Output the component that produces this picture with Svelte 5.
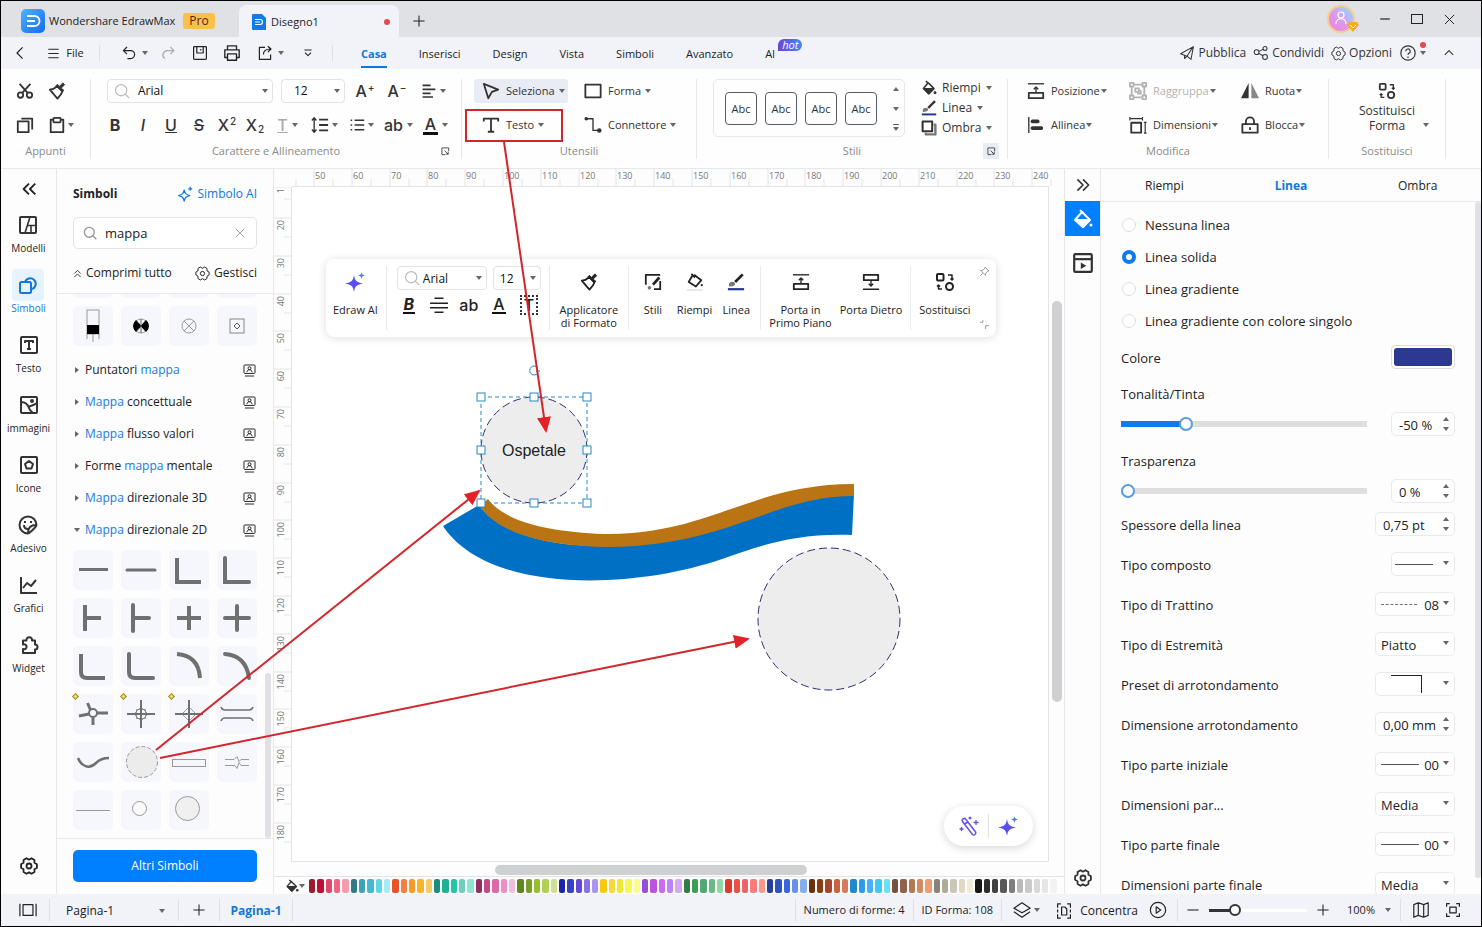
<script>
  const icons = {
    back: '<path d="M12 3L5 10l7 7"/>',
    menu: '<path d="M2 3.500h16M2 10h16M2 16.500h16"/>',
    undo: '<path d="M7.500 2.500L3 7l4.500 4.500M3.500 7H12a5 5 0 0 1 0 10H8"/>',
    redo: '<path d="M13 2.500L17.500 7 13 11.500M17 7H9a5.500 5.500 0 0 0-3 10"/>',
    save: '<rect x="2" y="2" width="16" height="16" rx="1"/><path d="M6 2v8h8V2M11 5v2"/>',
    print: '<path d="M5 6V2h10v4M5 15H2V6.500h16V15h-3"/><rect x="5" y="11" width="10" height="7"/>',
    share: '<path d="M10 3H3v15h14v-6M8 12c0-4 3-7 9-7M13.500 1.500L17.500 5l-4 4"/>',
    more: '<path d="M4 5h12M5 9.500l5 5 5-5"/>',
    plane: '<path d="M2 11L18 2l-3 16-5-4zM7 12.500V17l3-3 7-11"/>',
    nodes: '<circle cx="4.500" cy="9" r="3"/><circle cx="15" cy="4.500" r="2.500"/><circle cx="15" cy="15" r="3"/><path d="M7.500 8l5-2.500M7 10.500l5.500 3"/>',
    gear: '<path d="M18.800 8.100v3.800l-2.700 1.600-.1 3.200-3.200 1.900L10 17l-2.800 1.600L4 16.700l-.1-3.200-2.700-1.600V8.100l2.700-1.600.1-3.200 3.200-1.900L10 3l2.800-1.600L16 3.300l.1 3.200z"/><circle cx="10" cy="10" r="2.800"/>',
    help: '<circle cx="10" cy="10" r="8"/><path d="M7.500 8a2.500 2.500 0 1 1 3.500 2.300c-.8.4-1 .8-1 1.700M10 14v1.500"/>',
    up: '<path d="M3 13l7-7 7 7"/>',
    cut: '<circle cx="5" cy="14.500" r="3"/><circle cx="15" cy="14.500" r="3"/><path d="M4 2l9 10M16 2L7 12"/>',
    brush: '<path d="M2 8.500c4 0 6-2 8-4l6 6c-1 3-3 5-5.500 8z"/><path d="M9 4l7 7 1.500-2L14.500 7l4-4-2-2-4 4-2-2.500z" fill="currentColor" stroke-width="1"/>',
    copy: '<rect x="2" y="6" width="12" height="12"/><path d="M6 3h12v12"/>',
    paste: '<path d="M6 4H3v14h14V4h-3"/><rect x="6" y="2" width="8" height="5" rx="1"/>',
    alignCenter: '<path d="M2 3h10M2 8h16M2 13h10M2 17.500h13"/>',
    lines: '<path d="M9 4h10M9 10h10M9 16h10"/><path d="M3.500 3v14M1 5l2.500-3L6 5M1 15l2.500 3L6 15" stroke-width="1.500"/>',
    bullets: '<path d="M7 4h12M7 10h12M7 16h12M2 4h2M2 10h2M2 16h2"/>',
    pointer: '<path d="M2 2l16 6.500-7 2.500-4 7z"/>',
    rect: '<rect x="1.500" y="3" width="17" height="14"/>',
    textTool: '<path d="M2 6V3h16v3M10 3v14M6.500 17.500h7"/>',
    connector: '<path d="M3 3h7v13h7" stroke-width="1.500"/><circle cx="2.500" cy="3" r="2" fill="currentColor" stroke="none"/><circle cx="17" cy="16" r="2.500" fill="currentColor" stroke="none"/>',
    bucket: '<path d="M6 1.500l4 3M9 3.500l7 7-6.500 6.500L3 10.500z"/><path d="M4 11h12l-6 6z" fill="currentColor"/><circle cx="17.500" cy="16" r="1.800" fill="currentColor" stroke="none"/>',
    bucketLine: '<path d="M6 1l4 4M9 2l8 6-6 7-8-5 4-7"/><circle cx="17.500" cy="13.500" r="1.200" fill="currentColor" stroke="none"/><path d="M1 19h18" stroke="#e6e6e6"/>',
    pen: '<path d="M17.500 1.500L9 10" stroke-width="3"/><path d="M3 14c0-3 2-4 4-3s1 3-4 3z" fill="#777" stroke="#777"/><path d="M1 18h18" stroke="#2b3990" stroke-width="2.500"/>',
    shadow: '<path d="M16 6h2v12H6v-2" stroke="#777" stroke-width="3"/><rect x="2" y="2" width="12" height="12" fill="#fff" stroke-width="2.500"/>',
    front: '<path d="M1 2h18" stroke-width="1.500"/><path d="M10 12V6M7.500 8L10 5.500 12.500 8" stroke-width="1.500"/><rect x="2" y="12" width="16" height="6"/>',
    behind: '<rect x="2" y="2" width="16" height="6"/><path d="M10 8v6M7.500 12l2.500 2.500 2.500-2.500M1 18h18" stroke-width="1.500"/>',
    alignLeft: '<path d="M2 1v18" stroke-width="1.500"/><path d="M6 6h6M6 13.500h10" stroke-width="4" stroke-linecap="round"/>',
    group: '<rect x="3" y="3" width="14" height="14"/><rect x="1" y="1" width="4" height="4" fill="#fff"/><rect x="15" y="1" width="4" height="4" fill="#fff"/><rect x="1" y="15" width="4" height="4" fill="#fff"/><rect x="15" y="15" width="4" height="4" fill="#fff"/><rect x="7" y="7" width="4" height="4"/><path d="M13 9v4H9"/>',
    size: '<rect x="2.500" y="7.500" width="11" height="11"/><path d="M1 3h14M1 1v4M15 1v4M18 7v12M16.500 7h3M16.500 19h3" stroke-width="1.300"/>',
    flip: '<path d="M8.500 1v17H0z" fill="currentColor" stroke="none"/><path d="M11.500 1v17H20z" fill="#888" stroke="none"/>',
    lock: '<rect x="1.500" y="9" width="17" height="9.500"/><path d="M5.500 9V6a4.500 4.500 0 0 1 9 0v3M10 12.500v3"/>',
    swap: '<rect x="2" y="2" width="6.500" height="6.500" rx="1"/><circle cx="14.500" cy="14.500" r="3.500"/><path d="M13 3h4v5M15.500 6.500L17 8l1.500-1.500M7 17H3.500v-4M2 14.500l1.500-1.500L5 14.500" stroke-width="1.500"/>',
    launch: '<path d="M9 17H2V2h15v7M8 8l8 8M16 10v6h-6"/>',
    collapse: '<path d="M10 4l-6 6 6 6M17 4l-6 6 6 6"/>',
    expand: '<path d="M3 3l7 7-7 7M10 3l7 7-7 7"/>',
    templates: '<rect x="2" y="2" width="16" height="16" rx="1"/><path d="M12 2L7 18M9.500 10.500H18M13 10.500V18" stroke-width="1.600"/>',
    shapes: '<path d="M7 7a5.500 5.500 0 1 1 7 7"/><rect x="2" y="7" width="11" height="11" rx="1.500"/>',
    textBox: '<rect x="2" y="2" width="16" height="16" rx="1"/><path d="M6 8V6h8v2M10 6v8M8 14h4"/>',
    image: '<rect x="2" y="2" width="16" height="16" rx="1"/><path d="M2 7c5 0 7 3 8 6s3 4 4 5M10 12c2-2 4-1 8-4"/><circle cx="13" cy="6" r="1" fill="currentColor"/>',
    iconBox: '<rect x="2" y="2" width="16" height="16" rx="1"/><path d="M10 6l4 3-1.500 4.500h-5L6 9z"/>',
    sticker: '<path d="M18.500 10A8.500 8.500 0 1 0 10 18.500c1.500 0 8.500-7 8.500-8.500zM10 18c0-5 3-8 8-8M6 10c0 3 2 4 4 4"/><path d="M7 6v2M13 6v2"/>',
    chart: '<path d="M2 2v16h16M4 13l4-5 4 3 5-6"/>',
    widget: '<path d="M4 5.500h3.500a2.800 2.800 0 1 1 5.500 0h3v4a2.500 2.500 0 1 1 0 5v3.500H4v-4a2.500 2.500 0 1 0 0-4.500z"/>',
    search: '<circle cx="9" cy="9" r="7"/><path d="M14 14l5 5"/>',
    close: '<path d="M3 3l14 14M17 3L3 17"/>',
    foldUp: '<path d="M3 10l7-7 7 7M3 18l7-7 7 7"/>',
    badge: '<rect x="1.500" y="1.500" width="17" height="13" rx="1"/><circle cx="10" cy="6.500" r="2.300"/><path d="M6 12.500c.5-5 7.500-5 8 0M3 18.500h14"/>',
    sparkle: '<path d="M9 5c1 4.500 2 5.500 7 7-5 1.500-6 2.500-7 7-1-4.500-2-5.500-7-7 5-1.500 6-2.500 7-7zM16.500 1v5M14 3.500h5"/>',
    page: '<path d="M1 3v14M19 3v14"/><rect x="4.500" y="4" width="11" height="12"/>',
    plus: '<path d="M10 2v16M2 10h16"/>',
    minus: '<path d="M2 10h16"/>',
    layers: '<path d="M10 2l9 6-9 5-9-5zM1 12l9 6 9-6"/>',
    focus: '<path d="M6 1H2v5M14 1h4v5M6 19H2v-5M14 19h4v-5M2 8v4M18 8v4"/><path d="M7 5h4l2.500 2.500V15H7z"/>',
    play: '<circle cx="10" cy="10" r="8.500"/><path d="M8 6.500l5 3.500-5 3.500z"/>',
    map: '<path d="M2 4l5-2 6 2 5-2v14l-5 2-6-2-5 2zM7 2v14M13 4v14"/>',
    screen: '<path d="M6 2H2v4M14 2h4v4M6 18H2v-4M14 18h4v-4"/><rect x="6" y="6.500" width="8" height="7"/>',
    slides: '<rect x="2" y="2" width="16" height="16" rx="1"/><path d="M2 6.500h16"/><path d="M8 9.500l5 3-5 3z" fill="currentColor" stroke="none"/>',
    fillSolid: '<path d="M7 1l3 3"/><path d="M9 3l8 8-7 7-8-7z"/><path d="M3 11h13l-6 7z" fill="currentColor"/><circle cx="18" cy="16" r="1.500" fill="currentColor" stroke="none"/>',
    strikeLines: '<path d="M5 2.500h10M0 8h20M0 13h20M5 18h10" stroke-width="1.800"/>',
    styles: '<path d="M2 13V2h16M18 9v9h-7"/><path d="M17 5l-7 8" stroke-width="3"/><circle cx="6" cy="16.500" r="2" fill="#777" stroke="none"/>',
    pin: '<path d="M11 2l7 7-3 1-3 4v3l-9-9h3l4-3zM7 13l-5 5"/>',
    shrink: '<path d="M2 6h5V2M12 18v-6h6"/>'
  };

  const rail = [
    ['templates', 'Modelli'], ['shapes', 'Simboli'], ['textBox', 'Testo'], ['image', 'immagini'],
    ['iconBox', 'Icone'], ['sticker', 'Adesivo'], ['chart', 'Grafici'], ['widget', 'Widget']
  ];

  const tabs = ['Casa', 'Inserisci', 'Design', 'Vista', 'Simboli', 'Avanzato'];

  const categories = [
    ['Puntatori ', 'mappa', ''],
    ['', 'Mappa', ' concettuale'],
    ['', 'Mappa', ' flusso valori'],
    ['Forme ', 'mappa', ' mentale'],
    ['', 'Mappa', ' direzionale 3D'],
    ['', 'Mappa', ' direzionale 2D']
  ];

  const electric = [
    '<rect x="14" y="4" width="12" height="24" stroke="#999"/><rect x="14" y="19" width="12" height="9" fill="#000" stroke="none"/><path d="M14 28v5M20 28v8M26 28v5" stroke="#999"/>',
    '<circle cx="20" cy="20" r="7" stroke="#999"/><path d="M20 20l-5-5.500a7.500 7.500 0 0 0 0 11zM20 20l5-5.500a7.500 7.500 0 0 1 0 11z" fill="#000" stroke="#000"/><path d="M20 13v14" stroke="#666"/>',
    '<circle cx="20" cy="20" r="7" stroke="#999"/><path d="M15 15l10 10M25 15L15 25" stroke="#999"/>',
    '<rect x="13" y="13" width="14" height="14" stroke="#888"/><path d="M20 17l3 3-3 3-3-3z" stroke="#555"/>'
  ];

  const roads = [
    '<path d="M6 19.500h29" stroke-width="3"/>',
    '<path d="M6 20h28" stroke-width="3" stroke-linecap="round"/>',
    '<path d="M8 8v24h24" stroke-width="4"/>',
    '<path d="M8 8v24h24" stroke-width="4" stroke-linecap="round"/>',
    '<path d="M12 7v26M12 20h16" stroke-width="4"/>',
    '<path d="M12 7v26M12 20h16" stroke-width="4" stroke-linecap="round"/>',
    '<path d="M20 8v24M8 20h24" stroke-width="4"/>',
    '<path d="M20 8v24M8 20h24" stroke-width="4" stroke-linecap="round"/>',
    '<path d="M8 8v18q0 6 6 6h18" stroke-width="4"/>',
    '<path d="M8 8v18q0 6 6 6h18" stroke-width="4" stroke-linecap="round"/>',
    '<path d="M8 8c14 1 22 9 23 24" stroke-width="4"/>',
    '<path d="M8 8c14 1 22 9 24 24" stroke-width="4" stroke-linecap="round"/>',
    '<circle cx="20" cy="19" r="4" stroke-width="2"/><path d="M24 19h11M20 23v8M16 20L6 22M17.500 16l-3-7" stroke-width="3"/>',
    '<path d="M20 6v28M6 20h28" stroke-width="2"/><path d="M20 13l7 7-7 7-7-7zM15.500 15.500h9v9h-9z" stroke-width="1" opacity="0.7"/>',
    '<path d="M20 6v28M6 20h28" stroke-width="2"/><path d="M20 13l7 7-7 7-7-7z" stroke-width="1" opacity="0.7"/>',
    '<path d="M4 13q1 3 4 3h24q3 0 4-3M4 27q1-3 4-3h24q3 0 4 3" stroke-width="1.500"/>',
    '<path d="M5 16c3 8 11 12 18 5 4-4 7-5 13-5" stroke-width="2.500"/>',
    '<circle cx="21" cy="20" r="15.500" fill="#ececec" stroke="#999" stroke-dasharray="4 2"/>',
    '<rect x="3.500" y="17.500" width="33" height="7" stroke="#999"/>',
    '<path d="M8 17.500h9l3-3 2 5 2-2h8M8 23.500h10l2 3 2-6 2 3h8" stroke="#999"/>',
    '<path d="M3 20.500h34" stroke="#999"/>',
    '<circle cx="18.500" cy="18.500" r="7" fill="#fafafa" stroke="#999"/>',
    '<circle cx="18.500" cy="18.500" r="12" fill="#f0f0f0" stroke="#999"/>'
  ];
  const starred = [12, 13, 14];

  const palette = (
    '9b1c2c c00d35 e0476a ee6583 f59cae 32798a 3ea3b8 45b8d6 5fd5ea a6ecf7 ' +
    'e8532c f77e42 f79a2c f7b52c f8c86a 1b8f7c 1fb093 22c6a9 6dd0bf 8fe5d4 ' +
    '8f2f63 c34a87 dc68a8 ee8cc6 ecc0dc 61861f 7a9e2e 98bd2e b2d053 d0df93 ' +
    '1d24a5 3840c9 6447d6 8c70e8 ab95ef f6c80e f6d93a ecea33 f7f75a fbfb93 ' +
    '9650d4 bd52dd ca6cf0 ba84f8 d5a8f3 367b45 3b9f54 52a874 66ba86 93d5a9 ' +
    'e0372f ea5045 ea6469 fb7a7c fb968b 243f9c 2d52c4 3866df 6890ef 86aeea ' +
    '6a300c 8d3c0d a5472d c8633e d97a5c 2388c8 2e9bed 47b1f8 3fc8f3 68e1f8 ' +
    '76513c 92614a b47753 d38962 ee9c70 8b8178 b0aa99 cbc7b8 e0d9c8 f0ead8 ' +
    '161616 2d2d2d 414141 585858 7d7d7d b9b9b9 c9c9c9 d9d9d9 e5e5e5 f2f2f2'
  ).split(' ');

  const step = 37.8;
  const xTicks = Array.from({ length: 20 }, (_, i) => ({ label: 50 + i * 10, pos: Math.round(22 + i * step) }));
  const yTicks = Array.from({ length: 17 }, (_, i) => ({ label: 20 + i * 10, pos: Math.round(31 + i * step) }));

  const handles = [[0, 0], [53, 0], [106, 0], [0, 53], [106, 53], [0, 106], [53, 106], [106, 106]];

  const rows = [
    { label: 'Spessore della linea', kind: 'spin', value: '0,75 pt' },
    { label: 'Tipo composto', kind: 'line', value: '' },
    { label: 'Tipo di Trattino', kind: 'dash', value: '08' },
    { label: 'Tipo di Estremità', kind: 'text', value: 'Piatto' },
    { label: 'Preset di arrotondamento', kind: 'corner', value: '' },
    { label: 'Dimensione arrotondamento', kind: 'spin', value: '0,00 mm' },
    { label: 'Tipo parte iniziale', kind: 'line', value: '00' },
    { label: 'Dimensioni par...', kind: 'text', value: 'Media' },
    { label: 'Tipo parte finale', kind: 'line', value: '00' },
    { label: 'Dimensioni parte finale', kind: 'text', value: 'Media' }
  ];

  let lineType = $state('Linea solida');
  let search = $state('mappa');
  let tint = $state(-50);
  let transparency = $state(0);
  let zoom = $state(23);
</script>

{#snippet icon(name, size = 16, weight = 2)}
  <svg class="icon" width={size} height={size} viewBox="0 0 20 20" fill="none" stroke="currentColor" stroke-width={weight} aria-hidden="true">{@html icons[name]}</svg>
{/snippet}

{#snippet tool(name, label)}
  <button class="tool">{@render icon(name, 18)}<span>{label}</span><i class="caret"></i></button>
{/snippet}

{#snippet star(size)}
  <svg width={size} height={size} viewBox="0 0 20 20" aria-hidden="true">
    <defs>
      <linearGradient id="starFill" x1="0" y1="0" x2="1" y2="1"><stop offset="0" stop-color="#4a5cf0" /><stop offset="1" stop-color="#6a45ea" /></linearGradient>
    </defs>
    <path d="M9 3c1 6 2.500 7 9 8.500C11.500 13 10 14 9 20c-1-6-2.500-7-9-8.500C6.500 10 8 9 9 3z" fill="url(#starFill)" />
    <path d="M16.500 0c.5 2.500.8 3 3.500 3.500-2.700.5-3 1-3.500 3.500-.5-2.500-.8-3-3.500-3.500 2.700-.5 3-1 3.500-3.500z" fill="#4a7be8" />
  </svg>
{/snippet}

{#snippet tile(art, i, marked)}
  <button class="tile" aria-label="Simbolo {i + 1}">
    <svg width="40" height="40" viewBox="0 0 40 40" fill="none" stroke="#707070">{@html art}</svg>
    {#if marked}<i class="diamond"></i>{/if}
  </button>
{/snippet}

{#snippet steps()}
  <span class="steps"><i class="caret flip"></i><i class="caret"></i></span>
{/snippet}

<div class="window">
  <header class="titlebar">
    <div class="brand">
      <svg width="24" height="24" viewBox="0 0 24 24" aria-hidden="true">
        <defs><linearGradient id="logo" x1="0" y1="0" x2="1" y2="1"><stop offset="0" stop-color="#4fb4fb" /><stop offset="1" stop-color="#1269f5" /></linearGradient></defs>
        <rect width="24" height="24" rx="5" fill="url(#logo)" />
        <path d="M6 7h7.500a5 5 0 0 1 0 10H6M6 12h8" fill="none" stroke="#fff" stroke-width="1.800" />
      </svg>
      <span>Wondershare EdrawMax</span>
      <b class="pro">Pro</b>
    </div>
    <div class="doc-tab">
      <svg width="14" height="16" viewBox="0 0 14 16" aria-hidden="true">
        <path d="M1 0h9l4 4v12H1q-1 0-1-1V1q0-1 1-1z" fill="#0f7bee" />
        <path d="M3 5.500h5a2.500 2.500 0 0 1 0 5H3M3 8h5" fill="none" stroke="#fff" stroke-width="1.200" />
      </svg>
      <span>Disegno1</span>
      <i class="dot"></i>
    </div>
    <button class="plain new-tab" aria-label="Nuovo">{@render icon('plus', 14, 1.5)}</button>
    <div class="win-controls">
      <svg width="32" height="30" viewBox="0 0 32 30" aria-hidden="true">
        <defs><linearGradient id="avatar" x1="1" y1="0" x2="0" y2="1"><stop offset="0.100" stop-color="#8fdcf5" /><stop offset="0.500" stop-color="#d99cf5" /><stop offset="1" stop-color="#f77bd0" /></linearGradient></defs>
        <circle cx="14" cy="15" r="13" fill="url(#avatar)" stroke="#f7cd8c" stroke-width="2" />
        <circle cx="14" cy="11" r="3" fill="none" stroke="#fff" stroke-width="1.200" />
        <path d="M9 20c0-7 10-7 10 0" fill="none" stroke="#fff" stroke-width="1.200" />
        <path d="M22 18h8l2 3-6 7-6-7z" fill="#f7ac1e" />
        <path d="M23 21l3 3 3-3" fill="none" stroke="#fff" />
      </svg>
      <button class="plain" aria-label="Riduci">{@render icon('minus', 12, 2)}</button>
      <button class="plain" aria-label="Ingrandisci"><svg width="12" height="12" viewBox="0 0 12 12"><rect x="0.500" y="1.500" width="11" height="9" fill="none" stroke="#222" /></svg></button>
      <button class="plain" aria-label="Chiudi">{@render icon('close', 13, 1.5)}</button>
    </div>
  </header>

  <nav class="menubar">
    <div class="quick">
      <button class="plain back" aria-label="Indietro">{@render icon('back', 16, 1.5)}</button>
      <button class="plain file">{@render icon('menu', 13, 1.5)}<span>File</span></button>
      <i class="rule"></i>
      <button class="plain w36" aria-label="Annulla">{@render icon('undo', 16, 1.5)}<i class="caret"></i></button>
      <button class="plain w32 faded" aria-label="Ripeti">{@render icon('redo', 16, 1.5)}</button>
      <button class="plain w32" aria-label="Salva">{@render icon('save', 16, 1.5)}</button>
      <button class="plain w32" aria-label="Stampa">{@render icon('print', 18, 1.5)}</button>
      <button class="plain w44" aria-label="Esporta">{@render icon('share', 16, 1.5)}<i class="caret"></i></button>
      <button class="plain w32" aria-label="Personalizza">{@render icon('more', 12, 1.8)}</button>
      <i class="rule last"></i>
    </div>
    <div class="tabs">
      {#each tabs as tab, i}
        <button class="plain tab" class:active={i === 0}>{tab}</button>
      {/each}
      <button class="plain tab ai">AI<span class="hot">hot</span></button>
    </div>
    <div class="menu-right">
      <button class="plain">{@render icon('plane', 16, 1.3)}Pubblica</button>
      <button class="plain">{@render icon('nodes', 16, 1.3)}Condividi</button>
      <button class="plain">{@render icon('gear', 15, 1.3)}Opzioni</button>
      <button class="plain help" aria-label="Aiuto">{@render icon('help', 18, 1.3)}<i class="caret"></i><i class="dot"></i></button>
      <button class="plain fold" aria-label="Comprimi">{@render icon('up', 12, 1.8)}</button>
    </div>
  </nav>

  <div class="ribbon">
    <section class="group clipboard">
      <div class="clips">
        <button class="plain" aria-label="Taglia">{@render icon('cut', 18)}</button>
        <button class="plain" aria-label="Copia formato">{@render icon('brush', 18)}</button>
        <button class="plain" aria-label="Copia">{@render icon('copy', 18)}</button>
        <button class="plain" aria-label="Incolla">{@render icon('paste', 18)}<i class="caret"></i></button>
      </div>
      <footer><span class="name">Appunti</span></footer>
    </section>

    <section class="group font-group">
      <div class="line first">
        <label class="select family">
          {@render icon('search', 16, 1.5)}
          <select aria-label="Carattere"><option>Arial</option></select><i class="caret"></i>
        </label>
        <label class="select size"><select aria-label="Dimensione"><option>12</option></select><i class="caret"></i></label>
        <button class="plain glyph w24" aria-label="Ingrandisci carattere">A<sup>+</sup></button>
        <button class="plain glyph w24" aria-label="Riduci carattere">A<sup>−</sup></button>
        <button class="plain w32" aria-label="Allineamento">{@render icon('alignCenter', 16)}<i class="caret"></i></button>
      </div>
      <div class="line">
        <button class="plain glyph w28"><b>B</b></button>
        <button class="plain glyph w28"><em>I</em></button>
        <button class="plain glyph w28"><u>U</u></button>
        <button class="plain glyph w28"><s>S</s></button>
        <button class="plain glyph w28">X<sup>2</sup></button>
        <button class="plain glyph w28">X<sub>2</sub></button>
        <button class="plain glyph w37 faded"><u>T</u><i class="caret"></i></button>
        <button class="plain w37" aria-label="Interlinea">{@render icon('lines', 18)}<i class="caret"></i></button>
        <button class="plain w37" aria-label="Elenco">{@render icon('bullets', 16)}<i class="caret"></i></button>
        <button class="plain glyph w37">ab<i class="caret"></i></button>
        <button class="plain glyph w37"><span class="inked">A</span><i class="caret"></i></button>
      </div>
      <footer><span class="name">Carattere e Allineamento</span><button class="plain launch" aria-label="Altro">{@render icon('launch', 9)}</button></footer>
    </section>

    <section class="group tools-group">
      <div class="tool-grid">
        <button class="tool selected">{@render icon('pointer', 18)}<span>Seleziona</span><i class="caret"></i></button>
        {@render tool('rect', 'Forma')}
        {@render tool('textTool', 'Testo')}
        {@render tool('connector', 'Connettore')}
      </div>
      <footer><span class="name">Utensili</span></footer>
    </section>

    <section class="group styles-group">
      <div class="style-body">
        <div class="gallery">
          {#each [1, 2, 3, 4] as n}<button class="abc" aria-label="Stile {n}">Abc</button>{/each}
          <div class="gallery-arrows"><i class="caret flip"></i><i class="caret"></i><i class="caret barred"></i></div>
        </div>
        <div class="style-list">
          <button class="plain">{@render icon('bucket', 16)}Riempi<i class="caret"></i></button>
          <button class="plain">{@render icon('pen', 16)}Linea<i class="caret"></i></button>
          <button class="plain">{@render icon('shadow', 16)}Ombra<i class="caret"></i></button>
        </div>
      </div>
      <footer><span class="name">Stili</span><button class="plain launch shaded" aria-label="Altro">{@render icon('launch', 9)}</button></footer>
    </section>

    <section class="group edit-group">
      <div class="edit-grid">
        {@render tool('front', 'Posizione')}
        <button class="tool off">{@render icon('group', 18)}<span>Raggruppa</span><i class="caret"></i></button>
        {@render tool('flip', 'Ruota')}
        {@render tool('alignLeft', 'Allinea')}
        {@render tool('size', 'Dimensioni')}
        {@render tool('lock', 'Blocca')}
      </div>
      <footer><span class="name">Modifica</span></footer>
    </section>

    <section class="group swap-group">
      <button class="plain swap">{@render icon('swap', 18)}<span>Sostituisci<br />Forma</span><i class="caret"></i></button>
      <footer><span class="name">Sostituisci</span></footer>
    </section>
  </div>

  <main>
    <nav class="rail">
      <button class="plain collapse" aria-label="Comprimi">{@render icon('collapse', 18)}</button>
      {#each rail as [name, label]}
        <button class="plain rail-item" class:active={label === 'Simboli'}>
          <span class="rail-icon">{@render icon(name, 20)}</span>{label}
        </button>
      {/each}
      <button class="plain rail-gear" aria-label="Impostazioni">{@render icon('gear', 18)}</button>
    </nav>

    <aside class="symbols">
      <div class="symbols-head">
        <div class="spread"><b>Simboli</b><a href="#ai">{@render icon('sparkle', 16, 1.5)}Simbolo AI</a></div>
        <label class="search">
          {@render icon('search', 14)}
          <input type="text" aria-label="Cerca simboli" bind:value={search} />
          <button class="plain" aria-label="Cancella" onclick={() => (search = '')}>{@render icon('close', 12, 1.5)}</button>
        </label>
        <div class="spread actions">
          <button class="plain">{@render icon('foldUp', 9)}Comprimi tutto</button>
          <button class="plain">{@render icon('gear', 15, 1.3)}Gestisci</button>
        </div>
      </div>
      <div class="symbols-list">
        <div class="tiles">{#each electric as art, i}{@render tile('', i, false)}{/each}</div>
        <div class="tiles">{#each electric as art, i}{@render tile(art, i, false)}{/each}</div>
        <div class="categories">
          {#each categories as [before, hit, after], i}
            <button class="plain category">
              <i class="caret" class:right={i < 5}></i>
              <span>{before}<mark>{hit}</mark>{after}</span>
              {@render icon('badge', 13, 1.5)}
            </button>
          {/each}
        </div>
        <div class="tiles">{#each roads as art, i}{@render tile(art, i, starred.includes(i))}{/each}</div>
        <i class="thumb"></i>
      </div>
      <div class="symbols-foot"><button>Altri Simboli</button></div>
    </aside>

    <section class="board">
      <svg class="ruler-y" width="18" height="100%" aria-hidden="true">
        <path d="M0 0h17M10 12h7" />
        <text transform="translate(10 1) rotate(-90)" text-anchor="end">1</text>
        {#each yTicks as t}
          <path d="M0 {t.pos}h17M10 {t.pos + 19}h7" />
          <text transform="translate(10 {t.pos + 2}) rotate(-90)" text-anchor="end">{t.label}</text>
        {/each}
      </svg>
      <svg class="ruler-x" width="100%" height="17" aria-hidden="true">
        <path d="M4 10v7" />
        {#each xTicks as t}
          <path d="M{t.pos} 0v17M{t.pos + 19} 10v7" />
          <text x={t.pos + 1} y="10">{t.label}</text>
        {/each}
      </svg>
      <div class="stage">
        <svg class="drawing" width="100%" height="100%">
          <path d="M151 339L187 318C215 358 310 372 410 345C450 333 490 309 562 307L560 348C500 346 465 360 430 372C340 403 196 407 151 339z" fill="#0070c4" />
          <path d="M196 312C215 338 270 346 318 347C420 346 460 297 562 297L562 309C480 309 440 358 318 360C270 360 208 351 188 319z" fill="#bb7414" />
          <circle cx="537" cy="432" r="71" class="place" />
          <circle cx="242" cy="263" r="53" class="place" />
          <text x="242" y="269" text-anchor="middle" class="place-name">Ospetale</text>
          <g transform="translate(189 210)" class="selection">
            <rect width="106" height="106" stroke-dasharray="4 3" />
            {#each handles as [x, y]}<rect x={x - 4} y={y - 4} width="8" height="8" fill="#fff" />{/each}
            <path d="M57 -24a4.500 4.500 0 1 1 0 -5M59 -26h-4" />
          </g>
        </svg>

        <div class="float-bar">
          <button class="plain big">{@render star(20)}<span>Edraw AI</span></button>
          <i class="rule"></i>
          <div class="mini-font">
            <div class="line">
              <label class="select mini-family">{@render icon('search', 16, 1.5)}<select aria-label="Carattere forma"><option>Arial</option></select><i class="caret"></i></label>
              <label class="select mini-size"><select aria-label="Dimensione forma"><option>12</option></select><i class="caret"></i></label>
            </div>
            <div class="line glyphs">
              <button class="plain glyph"><b class="inked thin"><em>B</em></b></button>
              <button class="plain" aria-label="Centra">{@render icon('strikeLines', 18)}</button>
              <button class="plain glyph">ab</button>
              <button class="plain glyph"><span class="inked thin">A</span></button>
              <button class="plain glyph"><span class="dotted">T</span></button>
            </div>
          </div>
          <i class="rule"></i>
          <button class="plain big format">{@render icon('brush', 18)}<span>Applicatore<br />di Formato</span></button>
          <i class="rule"></i>
          <button class="plain big">{@render icon('styles', 18)}<span>Stili</span></button>
          <button class="plain big">{@render icon('bucketLine', 18)}<span>Riempi</span></button>
          <button class="plain big">{@render icon('pen', 18)}<span>Linea</span></button>
          <i class="rule"></i>
          <button class="plain big">{@render icon('front', 18)}<span>Porta in<br />Primo Piano</span></button>
          <button class="plain big">{@render icon('behind', 18)}<span>Porta Dietro</span></button>
          <i class="rule"></i>
          <button class="plain big">{@render icon('swap', 20)}<span>Sostituisci</span></button>
          <div class="corner-tools">{@render icon('pin', 11, 1.5)}{@render icon('shrink', 11, 1.5)}</div>
        </div>

        <div class="ai-pill">
          <button class="plain" aria-label="Bacchetta">
            <svg width="20" height="20" viewBox="0 0 20 20" fill="none" stroke="#6a50e8" stroke-width="1.500"><path d="M3.500 5.500a2 2 0 0 1 3.500-2l9.500 12.500a2 2 0 0 1-3 2.500zM5.500 8L9 6" /><path d="M11 0.500v3M9.500 2h3M17 4v5M14.500 6.500h5M2.500 11v4M0.500 13h4" stroke-width="1.300" /></svg>
          </button>
          <i class="rule"></i>
          <button class="plain" aria-label="Edraw AI">{@render star(20)}</button>
        </div>
      </div>
      <div class="scroll-y"><i></i></div>
      <div class="scroll-x"><i></i></div>
      <div class="palette">
        <button class="plain" aria-label="Riempimento">{@render icon('bucket', 14)}<i class="caret"></i></button>
        <div class="swatches">{#each palette as c}<i style="background: #{c}"></i>{/each}</div>
      </div>
    </section>

    <nav class="side-rail">
      <button class="plain" aria-label="Espandi">{@render icon('expand', 16)}</button>
      <button class="plain active" aria-label="Stile">{@render icon('fillSolid', 20)}</button>
      <button class="plain slides" aria-label="Presentazione">{@render icon('slides', 22)}</button>
      <button class="plain gear" aria-label="Impostazioni">{@render icon('gear', 18)}</button>
    </nav>

    <aside class="props">
      <div class="props-tabs">
        <button class="plain">Riempi</button>
        <button class="plain active">Linea</button>
        <button class="plain">Ombra</button>
      </div>
      <div class="props-body">
        {#each ['Nessuna linea', 'Linea solida', 'Linea gradiente', 'Linea gradiente con colore singolo'] as option}
          <label class="radio"><input type="radio" name="line" value={option} bind:group={lineType} />{option}</label>
        {/each}
        <div class="prop"><span>Colore</span><button class="color" aria-label="Colore"><i></i></button></div>
        <div class="slider-field">
          <label for="tint">Tonalità/Tinta</label>
          <div class="slider-row">
            <input id="tint" type="range" min="-100" max="100" bind:value={tint} style="--fill: {(tint + 100) / 2}%" />
            <span class="spin short"><input type="text" aria-label="Tinta" value="{tint} %" />{@render steps()}</span>
          </div>
        </div>
        <div class="slider-field">
          <label for="transparency">Trasparenza</label>
          <div class="slider-row">
            <input id="transparency" type="range" min="0" max="100" bind:value={transparency} style="--fill: {transparency}%" />
            <span class="spin short"><input type="text" aria-label="Trasparenza" value="{transparency} %" />{@render steps()}</span>
          </div>
        </div>
        {#each rows as row, i}
          <div class="prop">
            <label for="prop-{i}">{row.label}</label>
            {#if row.kind === 'spin'}
              <span class="spin"><input id="prop-{i}" type="text" value={row.value} />{@render steps()}</span>
            {:else}
              <span class="pick {row.kind}" class:short={row.kind === 'line' && !row.value}>
                {#if row.kind !== 'text'}<i class="sample"></i>{/if}
                <select id="prop-{i}"><option>{row.value}</option></select>
                <i class="caret"></i>
              </span>
            {/if}
          </div>
        {/each}
      </div>
      <i class="thumb"></i>
    </aside>
  </main>

  <footer class="status">
    <button class="plain pages" aria-label="Pagine">{@render icon('page', 18, 1.3)}</button>
    <i class="rule"></i>
    <label class="page-select"><select aria-label="Pagina"><option>Pagina-1</option></select><i class="caret"></i></label>
    <i class="rule"></i>
    <button class="plain add" aria-label="Aggiungi pagina">{@render icon('plus', 14, 1.5)}</button>
    <i class="rule"></i>
    <button class="plain current">Pagina-1</button>
    <i class="rule"></i>
    <div class="grow"></div>
    <i class="rule"></i>
    <span class="info">Numero di forme: 4</span>
    <i class="rule"></i>
    <span class="info">ID Forma: 108</span>
    <i class="rule"></i>
    <button class="plain layers" aria-label="Livelli">{@render icon('layers', 18, 1.3)}<i class="caret"></i></button>
    <button class="plain focus">{@render icon('focus', 16, 1.5)}Concentra</button>
    <button class="plain present" aria-label="Presenta">{@render icon('play', 18, 1.3)}</button>
    <i class="rule"></i>
    <div class="zoom">
      <button class="plain" aria-label="Riduci zoom">{@render icon('minus', 14, 1.5)}</button>
      <input type="range" aria-label="Zoom" min="0" max="100" bind:value={zoom} style="--fill: {zoom}%" />
      <button class="plain" aria-label="Aumenta zoom">{@render icon('plus', 14, 1.5)}</button>
    </div>
    <button class="plain percent">100%<i class="caret"></i></button>
    <i class="rule"></i>
    <div class="views">
      <button class="plain w32" aria-label="Mappa">{@render icon('map', 18, 1.3)}</button>
      <button class="plain w32" aria-label="Schermo intero">{@render icon('screen', 16, 1.5)}</button>
    </div>
  </footer>

  <svg class="notes" width="100%" height="100%" aria-hidden="true">
    <defs>
      <marker id="tip" viewBox="0 0 16 14" refX="14" refY="7" markerWidth="16" markerHeight="14" markerUnits="userSpaceOnUse" orient="auto"><path d="M0 0l16 7-16 7z" fill="#e32227" /></marker>
    </defs>
    <rect x="465" y="109" width="96" height="31" />
    <path d="M503 141L545 430" marker-end="url(#tip)" />
    <path d="M155 749L478 490" marker-end="url(#tip)" />
    <path d="M159 757L747 638" marker-end="url(#tip)" />
  </svg>
</div>

<style>
  :global(body) {
    margin: 0;
  }

  .window {
    box-sizing: border-box;
    position: relative;
    display: flex;
    flex-direction: column;
    height: 100vh;
    border: 1px solid #000;
    overflow: hidden;
    background: #fdfdfe;
    color: #222;
    font: 12px/16px "Open Sans", "Noto Sans", sans-serif;
  }

  .window * {
    box-sizing: border-box;
  }

  i {
    display: block;
    flex: none;
  }

  svg {
    flex: none;
  }

  .icon {
    display: block;
    stroke-linejoin: round;
  }

  button,
  select,
  input {
    font: inherit;
    color: inherit;
    margin: 0;
  }

  button {
    cursor: pointer;
  }

  .plain,
  .tool {
    display: flex;
    align-items: center;
    justify-content: center;
    padding: 0;
    border: 0;
    background: none;
    white-space: nowrap;
  }

  select {
    flex: 1;
    min-width: 0;
    width: 100%;
    padding: 0;
    border: 0;
    background: none;
    appearance: none;
    outline: none;
  }

  .caret {
    border: 3px solid transparent;
    border-top: 4px solid #666;
    border-bottom: 0;
  }

  .caret.flip {
    transform: rotate(180deg);
  }

  .caret.right {
    transform: rotate(-90deg);
  }

  .rule {
    width: 1px;
    height: 16px;
    background: #dfe0e5;
  }

  .dot {
    width: 6px;
    height: 6px;
    border-radius: 50%;
    background: #e5484d;
  }

  .faded {
    color: #aaa;
  }

  .w24 { width: 24px; }
  .w28 { width: 28px; }
  .w32 { width: 32px; }
  .w36 { width: 36px; }
  .w37 { width: 37px; }
  .w44 { width: 44px; }

  /* title bar */
  .titlebar {
    display: flex;
    height: 36px;
    flex: none;
    background: #e0e1e5;
  }

  .brand {
    display: flex;
    align-items: center;
    width: 238px;
    padding: 4px 0 0 20px;
    gap: 4px;
    font-size: 11px;
  }

  .pro {
    margin-left: 4px;
    padding: 0 6px;
    border-radius: 3px;
    background: #fbc04a;
    font-weight: 400;
    font-size: 12px;
    color: #4a2a00;
  }

  .doc-tab {
    display: flex;
    align-items: center;
    gap: 5px;
    width: 160px;
    margin-top: 4px;
    padding: 2px 9px 0 13px;
    border-radius: 8px 8px 0 0;
    background: #f2f3f9;
    font-size: 11px;
  }

  .doc-tab .dot {
    margin-left: auto;
  }

  .new-tab {
    width: 40px;
    padding-top: 4px;
  }

  .win-controls {
    display: flex;
    align-items: center;
    gap: 20px;
    margin-left: auto;
    padding-right: 25px;
  }

  /* menu bar */
  .menubar {
    display: flex;
    align-items: center;
    height: 32px;
    flex: none;
    background: #f2f3f9;
  }

  .quick {
    display: flex;
    align-items: center;
    flex: none;
  }

  .back {
    width: 40px;
  }

  .file {
    gap: 6px;
    width: 49px;
    font-size: 11px;
  }

  .quick .rule {
    margin: 0 16px 0 9px;
  }

  .quick .rule.last {
    margin: 0 0 0 8px;
  }

  .quick .caret {
    margin-left: 5px;
  }

  .tabs {
    display: flex;
    gap: 32px;
    margin-left: 28px;
    height: 100%;
    font-size: 11px;
  }

  .tab {
    position: relative;
    padding-top: 1px;
  }

  .tab.active {
    color: #0f78d8;
    font-weight: 700;
  }

  .tab.active::after {
    content: '';
    position: absolute;
    left: 0;
    right: 0;
    bottom: 1px;
    height: 2px;
    background: #0f78d8;
  }

  .hot {
    position: absolute;
    left: 13px;
    top: 2px;
    padding: 0 4px;
    border-radius: 6px 6px 6px 0;
    background: linear-gradient(90deg, #6b45d8, #4688f0);
    color: #fff;
    font-size: 11px;
    line-height: 12px;
    font-style: italic;
  }

  .menu-right {
    display: flex;
    align-items: center;
    gap: 7px;
    margin-left: auto;
    padding-right: 26px;
    color: #333;
  }

  .menu-right .plain {
    gap: 3px;
  }

  .help {
    position: relative;
  }

  .help .dot {
    position: absolute;
    top: -2px;
    right: 0;
  }

  .fold {
    margin-left: 10px;
  }

  /* ribbon */
  .ribbon {
    display: flex;
    height: 100px;
    flex: none;
    background: #fefefe;
    border-bottom: 1px solid #e7e8ec;
  }

  .group {
    display: flex;
    flex-direction: column;
    flex: none;
    height: 80px;
    margin-top: 10px;
    border-right: 1px solid #e7e8ec;
    color: #333;
  }

  .group footer {
    display: grid;
    grid-template-columns: 1fr auto 1fr;
    align-items: center;
    height: 16px;
    margin-top: auto;
    color: #8a8a8a;
    font-size: 11px;
  }

  .name {
    grid-column: 2;
  }

  .launch {
    justify-self: end;
    width: 16px;
    height: 16px;
    margin-right: 8px;
    color: #444;
  }

  .launch.shaded {
    background: #e9ecf4;
  }

  .clipboard { width: 90px; }
  .font-group { width: 371px; }
  .tools-group { width: 235px; }
  .styles-group { width: 311px; }
  .edit-group { width: 321px; }
  .swap-group { width: 117px; }

  .clips {
    display: grid;
    grid-template-columns: 32px 32px;
    grid-auto-rows: 24px;
    row-gap: 10px;
    padding-left: 8px;
  }

  .clips .plain {
    justify-content: flex-start;
    gap: 2px;
    padding-left: 7px;
  }

  .line {
    display: flex;
    align-items: center;
    height: 24px;
  }

  .font-group .line {
    padding-left: 10px;
  }

  .font-group .first {
    gap: 8px;
    padding-left: 16px;
    margin-bottom: 10px;
  }

  .font-group .plain {
    gap: 3px;
  }

  .glyph {
    font: 500 16px/18px "Inter", sans-serif;
  }

  .font-group .glyph {
    gap: 1px;
  }

  .glyph .caret {
    margin-left: 3px;
  }

  .glyph sup,
  .glyph sub {
    font-size: 10px;
    line-height: 10px;
  }

  .glyph sup {
    align-self: flex-start;
  }

  .glyph sub {
    align-self: flex-end;
  }

  .inked {
    line-height: 16px;
    border-bottom: 3px solid #111;
    padding: 0 2px;
  }

  .inked.thin {
    border-bottom-width: 2px;
    padding: 0 1px;
  }

  .select {
    display: flex;
    align-items: center;
    height: 24px;
    padding: 0 4px 0 6px;
    border: 1px solid #e2e3e8;
    border-radius: 4px;
    background: #fff;
    color: #111;
  }

  .select .icon {
    margin-right: 8px;
    color: #bbb;
  }

  .family {
    width: 166px;
  }

  .size {
    width: 64px;
    padding-left: 12px;
  }

  .tool-grid {
    display: grid;
    grid-template-columns: 94px 1fr;
    grid-auto-rows: 24px;
    gap: 10px 8px;
    padding-left: 12px;
  }

  .tool {
    justify-content: flex-start;
    gap: 6px;
    padding: 0 0 0 8px;
    border-radius: 3px;
    font-size: 11px;
  }

  .tool .caret {
    margin-left: -2px;
  }

  .tool.selected {
    background: #e9ecf4;
  }

  .tool.off {
    color: #b3b3b3;
  }

  .style-body {
    display: flex;
    gap: 16px;
    padding-left: 16px;
  }

  .gallery {
    display: flex;
    align-items: center;
    gap: 8px;
    width: 192px;
    height: 58px;
    padding: 1px 0 0 11px;
    border: 1px solid #e7e8ec;
    border-radius: 5px;
  }

  .abc {
    width: 32px;
    height: 33px;
    padding: 0;
    border: 1px solid #555b66;
    border-radius: 4px;
    background: #fff;
    font-size: 11px;
  }

  .gallery-arrows {
    display: flex;
    flex-direction: column;
    gap: 16px;
    margin-left: 8px;
  }

  .barred {
    position: relative;
  }

  .barred::before {
    content: '';
    position: absolute;
    left: -3px;
    top: -7px;
    width: 6px;
    height: 1px;
    background: #666;
  }

  .style-list {
    display: flex;
    flex-direction: column;
    align-items: flex-start;
    gap: 4px;
    padding-top: 1px;
  }

  .style-list .plain {
    gap: 5px;
  }

  .edit-grid {
    display: grid;
    grid-template-columns: 102px 112px auto;
    grid-auto-rows: 24px;
    row-gap: 10px;
    padding-left: 11px;
  }

  .edit-grid .tool .caret {
    margin-left: -5px;
  }

  .swap {
    position: relative;
    flex-direction: column;
    gap: 3px;
    padding-top: 3px;
    line-height: 15px;
  }

  .swap .caret {
    position: absolute;
    right: 16px;
    bottom: 6px;
  }

  /* body */
  main {
    display: flex;
    flex: 1;
    min-height: 0;
  }

  .rail {
    display: flex;
    flex-direction: column;
    align-items: center;
    width: 56px;
    border-right: 1px solid #e7e8ec;
  }

  .collapse {
    height: 40px;
    flex: none;
  }

  .rail-item {
    flex-direction: column;
    height: 60px;
    justify-content: flex-start;
    font-size: 10px;
    line-height: 14px;
  }

  .rail-icon {
    display: grid;
    place-items: center;
    width: 32px;
    height: 32px;
    border-radius: 4px;
    color: #333;
  }

  .rail-item.active,
  .rail-item.active .rail-icon {
    color: #0f78d8;
  }

  .rail-item.active .rail-icon {
    background: #e6f2ff;
  }

  .rail-gear {
    margin: auto 0 19px;
  }

  .symbols {
    display: flex;
    flex-direction: column;
    width: 217px;
    border-right: 1px solid #e7e8ec;
  }

  .symbols-head {
    display: flex;
    flex-direction: column;
    height: 125px;
    flex: none;
    padding: 17px 16px 0;
    border-bottom: 1px solid #e7e8ec;
  }

  .spread {
    display: flex;
    align-items: center;
    justify-content: space-between;
  }

  .spread .plain,
  .spread a {
    display: flex;
    align-items: center;
    gap: 4px;
  }

  a {
    color: #0f78d8;
    text-decoration: none;
  }

  .search {
    display: flex;
    align-items: center;
    gap: 8px;
    height: 32px;
    margin: 15px 0 16px;
    padding: 0 10px 0 9px;
    border: 1px solid #e2e3e8;
    border-radius: 5px;
    background: #fff;
    color: #999;
  }

  .search input {
    flex: 1;
    min-width: 0;
    padding: 0;
    border: 0;
    outline: 0;
    background: none;
    color: #222;
    font-size: 13px;
  }

  .symbols-list {
    position: relative;
    display: flex;
    flex: 1;
    min-height: 0;
    flex-direction: column;
    justify-content: flex-end;
    gap: 8px;
    padding: 0 16px 8px;
    overflow: hidden;
  }

  .tiles {
    display: grid;
    grid-template-columns: repeat(4, 40px);
    gap: 8px;
    flex: none;
  }

  .tile {
    position: relative;
    width: 40px;
    height: 40px;
    padding: 0;
    border: 0;
    border-radius: 5px;
    background: #f6f7fc;
  }

  .tile svg {
    display: block;
  }

  .diamond {
    position: absolute;
    left: 0;
    top: 0;
    width: 5px;
    height: 5px;
    border: 1px solid #a68a2a;
    background: #f7dd6a;
    transform: rotate(45deg);
  }

  .categories {
    margin-bottom: -4px;
    flex: none;
  }

  .category {
    width: 100%;
    height: 32px;
    gap: 5px;
    padding: 0 1px;
  }

  .category span {
    flex: 1;
    text-align: left;
  }

  mark {
    background: none;
    color: #1a7ad9;
  }

  .thumb {
    position: absolute;
    background: #e0e1e5;
    border-radius: 3px;
  }

  .symbols-list .thumb {
    right: 2px;
    bottom: 0;
    width: 6px;
    height: 165px;
  }

  .symbols-foot {
    padding: 11px 16px 12px;
    border-top: 1px solid #e7e8ec;
  }

  .symbols-foot button {
    display: block;
    width: 100%;
    height: 32px;
    border: 0;
    border-radius: 5px;
    background: #0080ff;
    color: #fff;
  }

  .board {
    display: grid;
    grid-template-columns: 18px minmax(0, 1fr) 15px;
    grid-template-rows: 18px minmax(0, 1fr) 15px 17px;
    flex: 1;
    min-width: 0;
  }

  .ruler-y {
    grid-row: 2;
    grid-column: 1;
    border-right: 1px solid #e3e4e8;
  }

  .ruler-x {
    grid-column: 2;
    grid-row: 1;
    box-sizing: content-box !important;
    border-bottom: 1px solid #e3e4e8;
  }

  .ruler-x,
  .ruler-y {
    font-size: 9px;
    fill: #777;
    stroke: none;
  }

  .ruler-x {
    overflow: visible;
  }

  .ruler-x path,
  .ruler-y path {
    stroke: #e3e4e8;
  }

  .stage {
    position: relative;
    grid-column: 2;
    grid-row: 2;
    border-right: 1px solid #e3e4e8;
    border-bottom: 1px solid #e3e4e8;
    background: #fff;
  }

  .drawing {
    position: absolute;
    inset: 0;
  }

  .place {
    fill: #ededed;
    stroke: #2b2f70;
    stroke-dasharray: 8 4;
  }

  .place-name {
    font: 16px "Liberation Sans", Arial, sans-serif;
    fill: #222;
  }

  .selection {
    fill: none;
    stroke: #2a86c4;
  }

  .float-bar {
    position: absolute;
    left: 34px;
    top: 72px;
    display: flex;
    align-items: flex-start;
    width: 670px;
    height: 78px;
    padding: 7px 6px 7px 7px;
    border-radius: 8px;
    background: #fff;
    box-shadow: 0 1px 8px rgba(0, 0, 0, 0.14);
    font-size: 11px;
    line-height: 13px;
    color: #222;
  }

  .float-bar .rule {
    height: 64px;
    margin: 0 8px;
    background: #eaebee;
  }

  .big {
    flex-direction: column;
    gap: 12px;
    min-width: 32px;
    padding: 7px 0 0;
  }

  .big + .big {
    margin-left: 8px;
  }

  .format {
    width: 62px;
  }

  .big svg[width='20'] {
    margin: -1px;
  }

  .mini-font {
    flex: none;
    width: 144px;
    margin-left: 2px;
  }

  .mini-font .line {
    gap: 6px;
  }

  .mini-font .glyphs {
    gap: 0;
    margin: 3px -3px 0;
  }

  .glyphs .plain {
    flex: 1;
  }

  .mini-family {
    width: 90px;
    font-size: 12px;
  }

  .mini-family .icon {
    margin-right: 3px;
  }

  .mini-size {
    width: 48px;
    font-size: 12px;
  }

  .dotted {
    width: 18px;
    line-height: 16px;
    border: 2px dotted #333;
  }

  .corner-tools {
    display: flex;
    flex-direction: column;
    justify-content: space-between;
    height: 100%;
    margin-left: auto;
    color: #888;
  }

  .ai-pill {
    position: absolute;
    right: 15px;
    bottom: 15px;
    display: flex;
    align-items: center;
    justify-content: space-around;
    width: 89px;
    height: 40px;
    padding: 0 10px;
    border-radius: 20px;
    background: #fff;
    box-shadow: 0 2px 8px rgba(0, 0, 0, 0.16);
  }

  .ai-pill .rule {
    height: 24px;
  }

  .scroll-y {
    grid-column: 3;
    grid-row: 1 / 3;
    padding-top: 132px;
  }

  .scroll-y i {
    width: 10px;
    height: 401px;
    margin-left: 3px;
    border-radius: 5px;
    background: #cfd0d2;
  }

  .scroll-x {
    grid-column: 1 / 4;
    padding: 3px 0 0 221px;
    border-bottom: 1px solid #e3e4e8;
  }

  .scroll-x i {
    width: 312px;
    height: 10px;
    border-radius: 5px;
    background: #cfd0d2;
  }

  .palette {
    grid-column: 1 / 4;
    display: flex;
    gap: 4px;
    padding: 2px 7px 1px 11px;
  }

  .palette .plain {
    gap: 0;
    color: #333;
  }

  .swatches {
    display: flex;
    flex: 1;
    gap: 2px;
  }

  .swatches i {
    flex: 1;
    height: 14px;
    border-radius: 2px;
  }

  .side-rail {
    display: flex;
    flex-direction: column;
    width: 37px;
    border-left: 1px solid #e7e8ec;
    border-right: 1px solid #e7e8ec;
    color: #333;
  }

  .side-rail .plain {
    height: 35px;
    flex: none;
  }

  .side-rail .plain:first-child {
    height: 32px;
  }

  .side-rail .active {
    background: #0080ff;
    color: #fff;
  }

  .side-rail .slides {
    margin-top: 9px;
  }

  .side-rail .gear {
    height: 32px;
    margin-top: auto;
  }

  .props {
    position: relative;
    display: flex;
    flex-direction: column;
    width: 380px;
    font-size: 13px;
    overflow: hidden;
  }

  .props-tabs {
    display: grid;
    grid-template-columns: repeat(3, 1fr);
    height: 33px;
    flex: none;
    padding-top: 1px;
    border-bottom: 1px solid #e7e8ec;
    font-size: 12px;
  }

  .props-tabs .active {
    color: #0f78d8;
    font-weight: 700;
  }

  .props-body {
    padding: 7px 26px 0 20px;
  }

  .props .thumb {
    right: 0;
    top: 33px;
    width: 6px;
    bottom: 16px;
  }

  .radio {
    display: flex;
    align-items: center;
    gap: 9px;
    height: 32px;
  }

  .radio input {
    appearance: none;
    width: 14px;
    height: 14px;
    margin-left: 1px;
    border: 1px solid #dcdde1;
    border-radius: 50%;
    background: #fff;
  }

  .radio input:checked {
    border: 4px solid #0f7bee;
  }

  .prop {
    display: flex;
    align-items: center;
    justify-content: space-between;
    height: 40px;
  }

  .prop label,
  .prop > span:first-child {
    padding-top: 2px;
  }

  .color {
    width: 64px;
    height: 24px;
    padding: 2px;
    border: 1px solid #dcdde1;
    border-radius: 4px;
    background: #fff;
  }

  .color i {
    height: 100%;
    border-radius: 3px;
    background: #2b3990;
  }

  .slider-field {
    padding-top: 1px;
  }

  .slider-field + .slider-field {
    margin-top: 7px;
  }

  .slider-field label {
    display: block;
    line-height: 33px;
  }

  .slider-row {
    display: flex;
    align-items: center;
    gap: 24px;
    height: 26px;
  }

  input[type='range'] {
    flex: 1;
    min-width: 0;
    height: 14px;
    appearance: none;
    background: linear-gradient(90deg, #0f7bee var(--fill), #dedede 0) center / 100% 6px no-repeat;
    border-radius: 3px;
  }

  input[type='range']::-webkit-slider-thumb {
    appearance: none;
    width: 14px;
    height: 14px;
    border: 2px solid #5a9ddf;
    border-radius: 50%;
    background: #fff;
  }

  .spin,
  .pick {
    display: flex;
    align-items: center;
    width: 80px;
    height: 24px;
    padding: 0 5px 0 7px;
    border: 1px solid #e9eaee;
    border-radius: 5px;
    background: #fff;
  }

  .pick {
    padding-left: 5px;
  }

  .short {
    width: 64px;
  }

  .pick.short {
    padding-left: 3px;
  }

  .spin input {
    flex: 1;
    min-width: 0;
    padding: 1px 0 0;
    border: 0;
    outline: 0;
    background: none;
  }

  .pick select {
    padding-top: 1px;
  }

  .pick .caret {
    margin-bottom: 3px;
  }

  .steps {
    display: flex;
    flex-direction: column;
    gap: 6px;
    margin-bottom: 1px;
  }

  .pick.line .sample {
    width: 38px;
    border-top: 1px solid #555;
  }

  .pick.dash .sample {
    width: 36px;
    border-top: 1px dashed #777;
  }

  .pick.dash select,
  .pick.line select {
    text-align: right;
    padding-right: 4px;
  }

  .pick.corner .sample {
    width: 31px;
    height: 18px;
    margin-left: 10px;
    border: solid #222;
    border-width: 1px 1px 0 0;
  }

  /* status bar */
  .status {
    display: flex;
    align-items: center;
    height: 32px;
    flex: none;
    background: #f2f3f9;
  }

  .status .rule {
    height: 22px;
  }

  .pages {
    width: 48px;
    padding-left: 6px;
  }

  .page-select {
    display: flex;
    align-items: center;
    width: 128px;
    padding: 1px 13px 0 16px;
  }

  .add {
    width: 40px;
  }

  .current {
    width: 72px;
    padding-top: 1px;
    color: #0f78d8;
    font-weight: 700;
  }

  .grow {
    flex: 1;
  }

  .info {
    padding: 0 8px;
    font-size: 11px;
  }

  .layers {
    gap: 3px;
    justify-content: flex-start;
    width: 54px;
    padding-left: 11px;
  }

  .focus {
    gap: 8px;
    padding-top: 1px;
  }

  .present {
    width: 39px;
  }

  .zoom {
    display: flex;
    align-items: center;
    gap: 9px;
    width: 160px;
    padding: 0 8px;
  }

  .zoom input[type='range'] {
    height: 12px;
    background: linear-gradient(90deg, #333 var(--fill), #fff 0) center / 100% 3px no-repeat;
  }

  .zoom input[type='range']::-webkit-slider-thumb {
    width: 12px;
    height: 12px;
    border-color: #333;
  }

  .percent {
    gap: 10px;
    width: 62px;
    font-size: 11px;
  }

  .views {
    display: flex;
    padding: 0 12px 0 4px;
  }

  .notes {
    position: absolute;
    inset: 0;
    pointer-events: none;
    fill: none;
    stroke: #d3262c;
    stroke-width: 2;
  }

  .notes marker {
    stroke: none;
  }
</style>
